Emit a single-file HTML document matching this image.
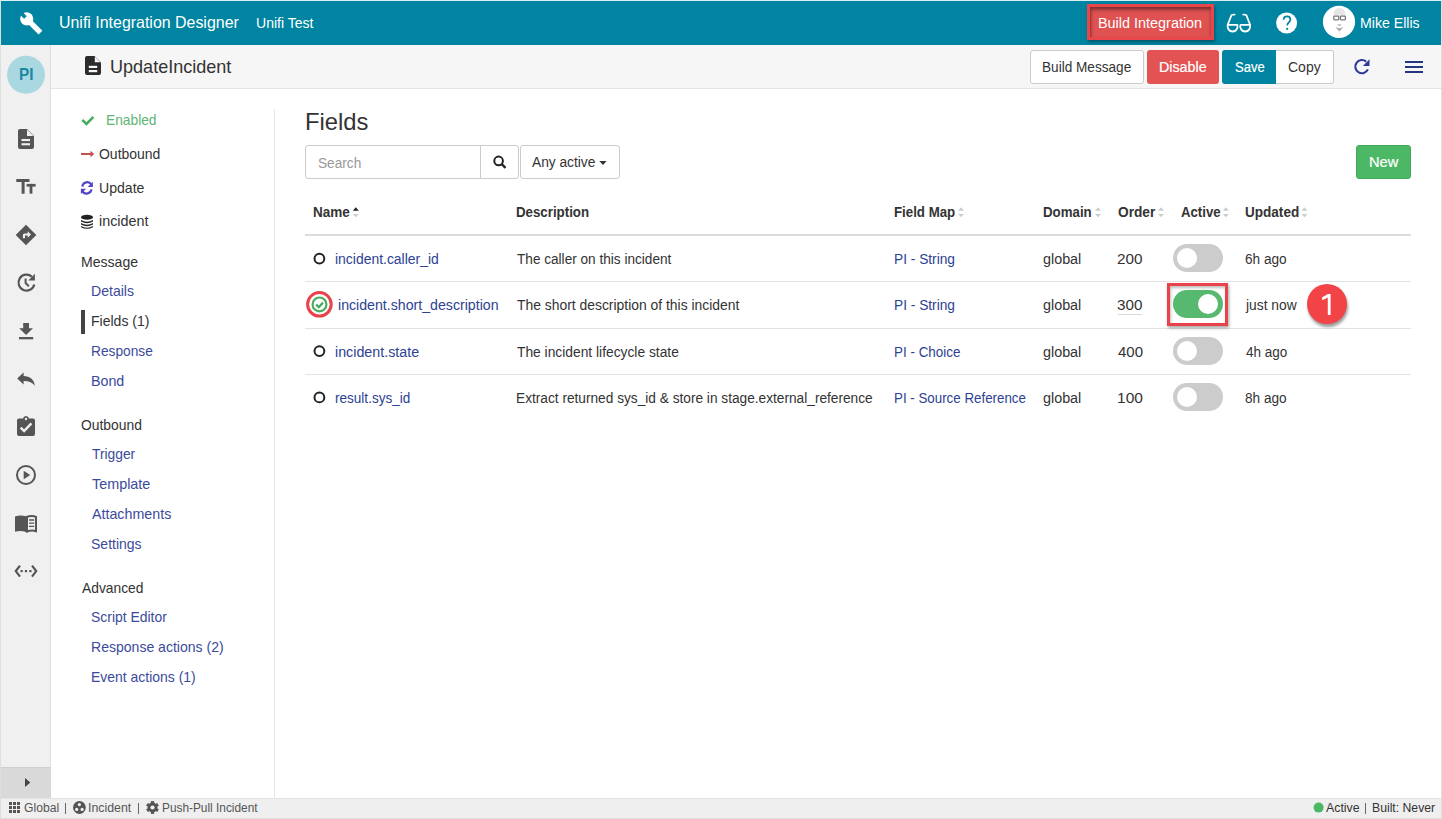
<!DOCTYPE html>
<html><head><meta charset="utf-8">
<style>
html,body{margin:0;padding:0;}
body{width:1442px;height:819px;overflow:hidden;position:relative;background:#fff;font-family:"Liberation Sans",sans-serif;}
.a{position:absolute;box-sizing:border-box;}
.t{position:absolute;white-space:nowrap;line-height:1;transform-origin:0 0;font-family:"Liberation Sans",sans-serif;}
svg{position:absolute;overflow:visible;}
</style></head><body>
<!-- frame -->
<div class="a" style="left:0;top:0;width:1442px;height:819px;border:1px solid #dedede;border-top-color:#d8eef2;"></div>
<!-- header -->
<div class="a" style="left:1px;top:1px;width:1440px;height:44px;background:#0084a1;"></div>
<!-- sidebar -->
<div class="a" style="left:1px;top:45px;width:50px;height:753px;background:#f0f0f0;border-right:1px solid #dedede;"></div>
<div class="a" style="left:1px;top:767px;width:50px;height:31px;background:#d9d9d9;border-top:1px solid #cfcfcf;"></div>
<!-- subheader -->
<div class="a" style="left:51px;top:45px;width:1390px;height:44px;background:#f6f6f6;border-bottom:1px solid #e4e4e4;"></div>
<!-- nav divider -->
<div class="a" style="left:274px;top:109px;width:1px;height:689px;background:#e6e6e6;"></div>
<!-- status bar -->
<div class="a" style="left:1px;top:798px;width:1440px;height:20px;background:#efefef;border-top:1px solid #e2e2e2;"></div>

<div class="a" style="left:1090px;top:7px;width:121px;height:31px;background:#e05252;box-shadow:inset 0 3px 4px rgba(0,0,0,0.25);"></div>
<!-- subheader buttons -->
<div class="a" style="left:1030px;top:50px;width:114px;height:34px;background:#fff;border:1px solid #ccc;border-radius:3px;"></div>
<div class="a" style="left:1147px;top:50px;width:72px;height:34px;background:#e35353;border-radius:3px;"></div>
<div class="a" style="left:1222px;top:50px;width:54px;height:34px;background:#0084a1;border-radius:3px 0 0 3px;"></div>
<div class="a" style="left:1276px;top:50px;width:58px;height:34px;background:#fff;border:1px solid #ccc;border-left:none;border-radius:0 3px 3px 0;"></div>

<!-- search group -->
<div class="a" style="left:305px;top:145px;width:214px;height:34px;background:#fff;border:1px solid #ccc;border-radius:3px;"></div>
<div class="a" style="left:480px;top:146px;width:1px;height:32px;background:#ccc;"></div>
<div class="a" style="left:520px;top:145px;width:100px;height:34px;background:#fff;border:1px solid #ccc;border-radius:3px;"></div>
<!-- new button -->
<div class="a" style="left:1356px;top:145px;width:55px;height:34px;background:#4cb866;border:1px solid #45a95c;border-radius:3px;"></div>

<!-- table lines -->
<div class="a" style="left:305px;top:234px;width:1106px;height:2px;background:#dcdcdc;"></div>
<div class="a" style="left:305px;top:281px;width:1106px;height:1px;background:#e3e3e3;"></div>
<div class="a" style="left:305px;top:328px;width:1106px;height:1px;background:#e3e3e3;"></div>
<div class="a" style="left:305px;top:374px;width:1106px;height:1px;background:#e3e3e3;"></div>

<!-- nav active bar -->
<div class="a" style="left:81px;top:310px;width:4px;height:24px;background:#444;"></div>

<svg width="1442" height="819" style="left:0;top:0;">
<!-- header wrench -->
<g transform="translate(26.7,18.8) rotate(45)" fill="#fff">
<circle r="6.6"/><rect x="0" y="-2.7" width="19.5" height="5.4"/>
<rect x="-8" y="-1.8" width="6.2" height="3.6" fill="#0084a1"/>
</g>
<!-- glasses -->
<g fill="none" stroke="#fff" stroke-width="1.8" stroke-linejoin="round" stroke-linecap="round">
<path d="M1227.9,24.8 H1237.3 A5,5 0 1 1 1227.9,24.8 Z"/>
<path d="M1240.5,24.8 H1249.9 A5,5 0 1 1 1240.5,24.8 Z"/>
<path d="M1227.6,25 L1231.5,15.2 Q1231.8,14.6 1234.6,14.6"/>
<path d="M1250.2,25 L1246.3,15.2 Q1246,14.6 1243.2,14.6"/>
</g>
<!-- help -->
<circle cx="1286.6" cy="23" r="10.5" fill="#fff"/>
<path d="M1283.6,19.8 C1283.6,17.5 1285.1,16.3 1287,16.3 C1289,16.3 1290.4,17.6 1290.4,19.5 C1290.4,22.2 1287.2,22.5 1287.2,25.4" fill="none" stroke="#0084a1" stroke-width="1.7"/>
<circle cx="1287.2" cy="28.8" r="1.15" fill="#0084a1"/>
<!-- avatar -->
<circle cx="1339" cy="21.8" r="16.1" fill="#fff"/>
<path d="M1333.5,15.5 Q1333.5,8 1339.5,8 Q1345.5,8 1345.5,15.5 Z" fill="#e6e6e6"/>
<g fill="none" stroke="#7a7a7a" stroke-width="1.3"><rect x="1333.8" y="16.2" width="5" height="3.6" rx="0.8"/><rect x="1340.4" y="16.2" width="5" height="3.6" rx="0.8"/></g>
<path d="M1337.3,24.3 H1341.5 L1340.3,26 H1338.5 Z" fill="#bbb"/>
<path d="M1335.2,26.8 Q1339.4,29.5 1343.6,26.8 L1339.4,31.6 Z" fill="#a8a8a8"/>
<path d="M1338.6,31.6 H1340.2 L1339.4,36 Z" fill="#eee"/>
<!-- subheader doc -->
<path d="M87,56 H94.5 L101,62.5 V73 Q101,75 99,75 H87 Q85,75 85,73 V58 Q85,56 87,56 Z" fill="#2b2b2b"/>
<path d="M94.8,56.6 V62.2 H100.4 Z" fill="#f6f6f6"/>
<rect x="88.8" y="65.8" width="8.4" height="2.2" fill="#f6f6f6"/>
<rect x="88.8" y="70" width="8.4" height="2.2" fill="#f6f6f6"/>
<!-- refresh -->
<path d="M1367.9,69.4 A6.6,6.6 0 1 1 1366.2,61.6" fill="none" stroke="#2d3a9a" stroke-width="2.1"/>
<path d="M1369.5,59.2 V65.9 H1362.9 Z" fill="#2d3a9a"/>
<!-- hamburger -->
<g fill="#26357f"><rect x="1405" y="61" width="18" height="2"/><rect x="1405" y="66" width="18" height="2"/><rect x="1405" y="71" width="18" height="2"/></g>
<!-- sidebar -->
<circle cx="26" cy="74.8" r="19" fill="#aad8e1"/>
<g fill="#555">
<path d="M20,129 H27 L34,136 V147 Q34,149 32,149 H20 Q18,149 18,147 V131 Q18,129 20,129 Z"/>
<rect x="16.3" y="179" width="13.2" height="3"/><rect x="21.6" y="179" width="3" height="14.7"/>
<rect x="26.6" y="183.9" width="9" height="2.7"/><rect x="29.6" y="183.9" width="2.8" height="9.8"/>
<path d="M26,224.7 L36.3,235 L26,245.3 L15.7,235 Z"/>
<path d="M23.2,323 H29 V328.2 H33 L26.1,334.9 L19.2,328.2 H23.2 Z"/>
<rect x="19" y="337" width="14.2" height="2.3"/>
<path d="M17.2,378.6 L23.6,372.6 V376.1 C30,376.3 34,379.5 34.9,385.8 C32.5,382.3 29,380.9 23.6,381 V384.6 Z"/>
<path d="M19,418.5 H23 Q23.5,416 26,416 Q28.5,416 29,418.5 H33 Q35,418.5 35,420.5 V434 Q35,436 33,436 H19 Q17,436 17,434 V420.5 Q17,418.5 19,418.5 Z"/>
<path d="M23.7,470.7 L30.2,475 L23.7,479.3 Z"/>
<path d="M15,516.5 Q20.5,514.6 26,516.3 V532 Q20.5,530.3 15,531.8 Z"/>
<rect x="20.5" y="570" width="2.2" height="2.2"/><rect x="24.9" y="570" width="2.2" height="2.2"/><rect x="29.3" y="570" width="2.2" height="2.2"/>
</g>
<path d="M27,129.5 V136 H33.5 Z" fill="#f0f0f0"/>
<rect x="21.5" y="139" width="8.5" height="2.1" fill="#f0f0f0"/>
<rect x="21.5" y="143.2" width="8.5" height="2.1" fill="#f0f0f0"/>
<path d="M22.9,238.3 V235 Q22.9,233.4 24.5,233.4 H27.7 V231.2 L31,234.5 L27.7,237.8 V235.6 H25 V238.3 Z" fill="#f0f0f0"/>
<g fill="none" stroke="#555" stroke-width="2.2">
<path d="M34.3,284.5 A8,8 0 1 1 31.8,276.6"/>
<path d="M25.6,278.5 V283 L28.8,286.2" stroke-width="2"/>
<circle cx="26" cy="475" r="9" stroke-width="2"/>
<path d="M27,516.8 Q32,515 36,516.8 V531.2 Q32,529.8 27,531.5 Z" stroke-width="2"/>
<path d="M20,565.6 L15.8,571.1 L20,576.6 M32,565.6 L36.2,571.1 L32,576.6" stroke-width="2.2"/>
</g>
<path d="M34.9,273.8 V280.5 H28.3 Z" fill="#555"/>
<circle cx="26" cy="419" r="1.2" fill="#f0f0f0"/>
<path d="M20.7,427.6 L24.1,431 L31.4,423.4" fill="none" stroke="#f0f0f0" stroke-width="2.4"/>
<g stroke="#555" stroke-width="1.3"><path d="M29,520 H34.2 M29,523.2 H34.2 M29,526.4 H34.2"/></g>
<path d="M25,778 L30.3,782.5 L25,787 Z" fill="#444"/>
<!-- nav icons -->
<path d="M82.3,120 L86.5,124 L93.4,116.8" fill="none" stroke="#4aad5e" stroke-width="2.6"/>
<rect x="81" y="153" width="10" height="2" fill="#c4504f"/>
<path d="M90.5,150.8 L94.2,154 L90.5,157.2 Z" fill="#c4504f"/>
<g fill="none" stroke="#5046c8" stroke-width="2.2">
<path d="M82.3,186.5 A5,5 0 0 1 91.3,184.3"/>
<path d="M91.5,189.3 A5,5 0 0 1 82.5,191.5"/>
</g>
<path d="M92.9,181.8 V187 H87.7 Z" fill="#5046c8"/><path d="M80.9,193.9 V188.7 H86.1 Z" fill="#5046c8"/>
<g fill="#222">
<ellipse cx="87" cy="217.3" rx="6" ry="2.5"/>
<path d="M81,220 Q87,223.5 93,220 V221.6 Q87,225 81,221.6 Z"/>
<path d="M81,223 Q87,226.5 93,223 V224.6 Q87,228 81,224.6 Z"/>
<path d="M81,226 Q87,229.5 93,226 V227.2 Q87,230.3 81,227.2 Z"/>
</g>
<!-- search icon + caret -->
<circle cx="498.6" cy="160.9" r="4.3" fill="none" stroke="#222" stroke-width="2"/>
<path d="M501.6,164 L505.5,167.8" stroke="#222" stroke-width="2.4"/>
<path d="M599.3,161 H606.6 L603,165 Z" fill="#333"/>
<!-- sort carets -->
<g fill="#ccc">
<path d="M352.8,210.8 L355.8,207.3 L358.8,210.8 Z" fill="#222"/><path d="M352.8,213.9 L355.8,217.2 L358.8,213.9 Z"/>
<path d="M958,210.8 L961,207.3 L964,210.8 Z"/><path d="M958,213.9 L961,217.2 L964,213.9 Z"/>
<path d="M1095,210.8 L1098,207.3 L1101,210.8 Z"/><path d="M1095,213.9 L1098,217.2 L1101,213.9 Z"/>
<path d="M1158,210.8 L1161,207.3 L1164,210.8 Z"/><path d="M1158,213.9 L1161,217.2 L1164,213.9 Z"/>
<path d="M1222.8,210.8 L1225.8,207.3 L1228.8,210.8 Z"/><path d="M1222.8,213.9 L1225.8,217.2 L1228.8,213.9 Z"/>
<path d="M1301.5,210.8 L1304.5,207.3 L1307.5,210.8 Z"/><path d="M1301.5,213.9 L1304.5,217.2 L1307.5,213.9 Z"/>
</g>
<!-- row icons -->
<g fill="none" stroke="#222" stroke-width="2">
<circle cx="319.4" cy="258.6" r="4.9"/>
<circle cx="319.4" cy="351.1" r="4.9"/>
<circle cx="319.4" cy="397.4" r="4.9"/>
</g>
<circle cx="319.5" cy="304.4" r="6.9" fill="none" stroke="#4aad5e" stroke-width="2.2"/>
<path d="M316.1,304.6 L318.8,307.2 L323,302.6" fill="none" stroke="#4aad5e" stroke-width="2.3"/>
<!-- toggles -->
<rect x="1173" y="244" width="50" height="28" rx="14" fill="#cccccc"/><circle cx="1187" cy="258" r="10" fill="#fff"/>
<rect x="1173" y="290" width="50" height="28" rx="14" fill="#57b96f"/><circle cx="1208" cy="304" r="10" fill="#fff"/>
<rect x="1173" y="337" width="50" height="28" rx="14" fill="#cccccc"/><circle cx="1187" cy="351" r="10" fill="#fff"/>
<rect x="1173" y="383" width="50" height="28" rx="14" fill="#cccccc"/><circle cx="1187" cy="397" r="10" fill="#fff"/>
<!-- order 300 underline -->
<path d="M1118,314.5 H1142" stroke="#dadada" stroke-width="1"/>
<!-- status icons -->
<g fill="#555">
<rect x="9" y="802" width="3" height="3"/><rect x="13" y="802" width="3" height="3"/><rect x="17" y="802" width="3" height="3"/>
<rect x="9" y="806" width="3" height="3"/><rect x="13" y="806" width="3" height="3"/><rect x="17" y="806" width="3" height="3"/>
<rect x="9" y="810" width="3" height="3"/><rect x="13" y="810" width="3" height="3"/><rect x="17" y="810" width="3" height="3"/>
<circle cx="79.4" cy="807.5" r="6.4"/>
</g>
<g fill="#efefef"><circle cx="79.4" cy="804.6" r="1.6"/><circle cx="76.7" cy="809.4" r="1.6"/><circle cx="82.1" cy="809.4" r="1.6"/></g>
<g transform="translate(152.5,807.5)" fill="#555">
<circle r="4.9"/>
<rect x="-1.6" y="-6.4" width="3.2" height="3" transform="rotate(0)"/>
<rect x="-1.6" y="-6.4" width="3.2" height="3" transform="rotate(60)"/>
<rect x="-1.6" y="-6.4" width="3.2" height="3" transform="rotate(120)"/>
<rect x="-1.6" y="-6.4" width="3.2" height="3" transform="rotate(180)"/>
<rect x="-1.6" y="-6.4" width="3.2" height="3" transform="rotate(240)"/>
<rect x="-1.6" y="-6.4" width="3.2" height="3" transform="rotate(300)"/>
<circle r="2.1" fill="#efefef"/>
</g>
<circle cx="1318.6" cy="807.6" r="5" fill="#4cb866"/>
</svg>
<div class="a" style="left:65px;top:803px;width:1px;height:11px;background:#666;"></div>
<div class="a" style="left:138px;top:803px;width:1px;height:11px;background:#666;"></div>
<div class="a" style="left:1365px;top:803px;width:1px;height:11px;background:#666;"></div>
<span class="t" style="left:18.70px;top:66.00px;font-size:17.0px;color:#1a88a5;transform:scaleX(0.9005);font-weight:bold;">PI</span>
<span class="t" style="left:58.50px;top:14.00px;font-size:16.5px;color:#fff;transform:scaleX(0.9657);">Unifi Integration Designer</span>
<span class="t" style="left:256.05px;top:16.00px;font-size:14.5px;color:#fff;transform:scaleX(0.9683);">Unifi Test</span>
<span class="t" style="left:1097.85px;top:16.00px;font-size:14.0px;color:#fff;transform:scaleX(1.0291);">Build Integration</span>
<span class="t" style="left:1360.07px;top:16.00px;font-size:14.5px;color:#fff;transform:scaleX(0.9732);">Mike Ellis</span>
<span class="t" style="left:110.25px;top:58.00px;font-size:18.5px;color:#333;transform:scaleX(0.9753);">UpdateIncident</span>
<span class="t" style="left:1042.41px;top:60.00px;font-size:14.0px;color:#333;transform:scaleX(0.9713);">Build Message</span>
<span class="t" style="left:1159.26px;top:60.00px;font-size:14.0px;color:#fff;transform:scaleX(1.0191);-webkit-text-stroke:0.2px #fff;">Disable</span>
<span class="t" style="left:1234.71px;top:60.00px;font-size:14.0px;color:#fff;transform:scaleX(0.9295);-webkit-text-stroke:0.2px #fff;">Save</span>
<span class="t" style="left:1288.00px;top:60.00px;font-size:14.0px;color:#333;">Copy</span>
<span class="t" style="left:106.40px;top:113.00px;font-size:14.5px;color:#5fb574;transform:scaleX(0.9489);">Enabled</span>
<span class="t" style="left:98.97px;top:147.00px;font-size:14.5px;color:#333;transform:scaleX(0.9636);">Outbound</span>
<span class="t" style="left:98.54px;top:181.00px;font-size:14.5px;color:#333;transform:scaleX(0.9706);">Update</span>
<span class="t" style="left:98.67px;top:214.00px;font-size:14.5px;color:#333;transform:scaleX(0.9890);">incident</span>
<span class="t" style="left:80.87px;top:255.00px;font-size:14.5px;color:#333;transform:scaleX(0.9704);">Message</span>
<span class="t" style="left:90.67px;top:284.00px;font-size:14.5px;color:#3b4b9c;transform:scaleX(0.9711);">Details</span>
<span class="t" style="left:90.68px;top:314.00px;font-size:14.5px;color:#333;transform:scaleX(0.9681);">Fields (1)</span>
<span class="t" style="left:90.70px;top:344.00px;font-size:14.5px;color:#3b4b9c;transform:scaleX(0.9474);">Response</span>
<span class="t" style="left:90.66px;top:374.00px;font-size:14.5px;color:#3b4b9c;transform:scaleX(0.9825);">Bond</span>
<span class="t" style="left:81.38px;top:418.00px;font-size:14.5px;color:#333;transform:scaleX(0.9555);">Outbound</span>
<span class="t" style="left:91.52px;top:447.00px;font-size:14.5px;color:#3b4b9c;transform:scaleX(0.9515);">Trigger</span>
<span class="t" style="left:91.51px;top:477.00px;font-size:14.5px;color:#3b4b9c;transform:scaleX(0.9921);">Template</span>
<span class="t" style="left:91.80px;top:507.00px;font-size:14.5px;color:#3b4b9c;transform:scaleX(0.9836);">Attachments</span>
<span class="t" style="left:91.17px;top:537.00px;font-size:14.5px;color:#3b4b9c;transform:scaleX(0.9657);">Settings</span>
<span class="t" style="left:82.00px;top:581.00px;font-size:14.5px;color:#333;transform:scaleX(0.9526);">Advanced</span>
<span class="t" style="left:91.07px;top:610.00px;font-size:14.5px;color:#3b4b9c;transform:scaleX(0.9605);">Script Editor</span>
<span class="t" style="left:90.58px;top:640.00px;font-size:14.5px;color:#3b4b9c;transform:scaleX(0.9680);">Response actions (2)</span>
<span class="t" style="left:90.58px;top:670.00px;font-size:14.5px;color:#3b4b9c;transform:scaleX(0.9623);">Event actions (1)</span>
<span class="t" style="left:304.60px;top:110.00px;font-size:24.0px;color:#333;transform:scaleX(0.9915);">Fields</span>
<span class="t" style="left:317.69px;top:156.00px;font-size:14.0px;color:#999;transform:scaleX(0.9750);">Search</span>
<span class="t" style="left:532.30px;top:155.00px;font-size:14.0px;color:#333;transform:scaleX(0.9811);">Any active</span>
<span class="t" style="left:1368.73px;top:155.00px;font-size:14.0px;color:#fff;transform:scaleX(1.0427);-webkit-text-stroke:0.2px #fff;">New</span>
<span class="t" style="left:312.92px;top:205.00px;font-size:14.0px;color:#333;transform:scaleX(0.9660);font-weight:bold;">Name</span>
<span class="t" style="left:516.14px;top:205.00px;font-size:14.0px;color:#333;transform:scaleX(0.9488);font-weight:bold;">Description</span>
<span class="t" style="left:893.94px;top:205.00px;font-size:14.0px;color:#333;transform:scaleX(0.9482);font-weight:bold;">Field Map</span>
<span class="t" style="left:1043.44px;top:205.00px;font-size:14.0px;color:#333;transform:scaleX(0.9483);font-weight:bold;">Domain</span>
<span class="t" style="left:1117.85px;top:205.00px;font-size:14.0px;color:#333;transform:scaleX(0.9791);font-weight:bold;">Order</span>
<span class="t" style="left:1180.67px;top:205.00px;font-size:14.0px;color:#333;transform:scaleX(0.9427);font-weight:bold;">Active</span>
<span class="t" style="left:1245.19px;top:205.00px;font-size:14.0px;color:#333;transform:scaleX(0.9677);font-weight:bold;">Updated</span>
<span class="t" style="left:335.09px;top:252.00px;font-size:14.0px;color:#2d4292;transform:scaleX(0.9953);">incident.caller_id</span>
<span class="t" style="left:517.23px;top:252.00px;font-size:14.0px;color:#333;transform:scaleX(0.9720);">The caller on this incident</span>
<span class="t" style="left:893.90px;top:252.00px;font-size:14.0px;color:#2d4292;transform:scaleX(0.9801);">PI - String</span>
<span class="t" style="left:1043.13px;top:252.00px;font-size:14.0px;color:#333;transform:scaleX(1.0240);">global</span>
<span class="t" style="left:1117.03px;top:252.00px;font-size:14.0px;color:#333;transform:scaleX(1.0940);">200</span>
<span class="t" style="left:1245.22px;top:252.00px;font-size:14.0px;color:#333;transform:scaleX(0.9740);">6h ago</span>
<span class="t" style="left:337.88px;top:298.00px;font-size:14.0px;color:#2d4292;transform:scaleX(1.0112);">incident.short_description</span>
<span class="t" style="left:517.22px;top:298.00px;font-size:14.0px;color:#333;transform:scaleX(0.9919);">The short description of this incident</span>
<span class="t" style="left:893.90px;top:298.00px;font-size:14.0px;color:#2d4292;transform:scaleX(0.9801);">PI - String</span>
<span class="t" style="left:1043.13px;top:298.00px;font-size:14.0px;color:#333;transform:scaleX(1.0240);">global</span>
<span class="t" style="left:1117.19px;top:298.00px;font-size:14.0px;color:#333;transform:scaleX(1.0872);">300</span>
<span class="t" style="left:1246.25px;top:298.00px;font-size:14.0px;color:#333;transform:scaleX(0.9859);">just now</span>
<span class="t" style="left:335.07px;top:345.00px;font-size:14.0px;color:#2d4292;transform:scaleX(1.0195);">incident.state</span>
<span class="t" style="left:517.22px;top:345.00px;font-size:14.0px;color:#333;transform:scaleX(0.9857);">The incident lifecycle state</span>
<span class="t" style="left:893.92px;top:345.00px;font-size:14.0px;color:#2d4292;transform:scaleX(0.9603);">PI - Choice</span>
<span class="t" style="left:1043.13px;top:345.00px;font-size:14.0px;color:#333;transform:scaleX(1.0240);">global</span>
<span class="t" style="left:1117.50px;top:345.00px;font-size:14.0px;color:#333;transform:scaleX(1.0736);">400</span>
<span class="t" style="left:1245.63px;top:345.00px;font-size:14.0px;color:#333;transform:scaleX(0.9643);">4h ago</span>
<span class="t" style="left:335.12px;top:391.00px;font-size:14.0px;color:#2d4292;transform:scaleX(0.9677);">result.sys_id</span>
<span class="t" style="left:516.41px;top:391.00px;font-size:14.0px;color:#333;transform:scaleX(0.9773);">Extract returned sys_id &amp; store in stage.external_reference</span>
<span class="t" style="left:893.93px;top:391.00px;font-size:14.0px;color:#2d4292;transform:scaleX(0.9526);">PI - Source Reference</span>
<span class="t" style="left:1043.13px;top:391.00px;font-size:14.0px;color:#333;transform:scaleX(1.0240);">global</span>
<span class="t" style="left:1116.63px;top:391.00px;font-size:14.0px;color:#333;transform:scaleX(1.1116);">100</span>
<span class="t" style="left:1245.29px;top:391.00px;font-size:14.0px;color:#333;transform:scaleX(0.9724);">8h ago</span>
<span class="t" style="left:23.69px;top:802.00px;font-size:12.5px;color:#555;transform:scaleX(0.9715);">Global</span>
<span class="t" style="left:88.39px;top:802.00px;font-size:12.5px;color:#555;transform:scaleX(0.9891);">Incident</span>
<span class="t" style="left:162.05px;top:802.00px;font-size:12.5px;color:#555;transform:scaleX(0.9480);">Push-Pull Incident</span>
<span class="t" style="left:1326.00px;top:802.00px;font-size:12.5px;color:#333;transform:scaleX(0.9869);">Active</span>
<span class="t" style="left:1371.82px;top:802.00px;font-size:12.5px;color:#333;transform:scaleX(0.9767);">Built: Never</span>
<div class="a" style="left:1087.2px;top:4.2px;width:126.7px;height:36.3px;border:3px solid #e8464a;box-shadow:1px 2px 3px rgba(0,0,0,0.35), inset 1px 2px 3px rgba(0,0,0,0.3);"></div>
<div class="a" style="left:1167px;top:283.2px;width:60.8px;height:42.8px;border:3px solid #e8434a;box-shadow:1px 2px 3px rgba(0,0,0,0.35), inset 1px 2px 3px rgba(0,0,0,0.25);"></div>
<div class="a" style="left:1307px;top:283.7px;width:40px;height:40px;border-radius:50%;background:#f24447;box-shadow:1px 3px 3px rgba(0,0,0,0.4);"></div>
<svg width="1442" height="819" style="left:0;top:0;">
<circle cx="319.4" cy="304.3" r="11.8" fill="none" stroke="#e8434a" stroke-width="3"/>
<path d="M1322,297.6 L1327.9,294 H1330.6 V315 H1327.8 V297.4 L1322.4,300.3 Z" fill="#fff"/>
</svg>


</body></html>
